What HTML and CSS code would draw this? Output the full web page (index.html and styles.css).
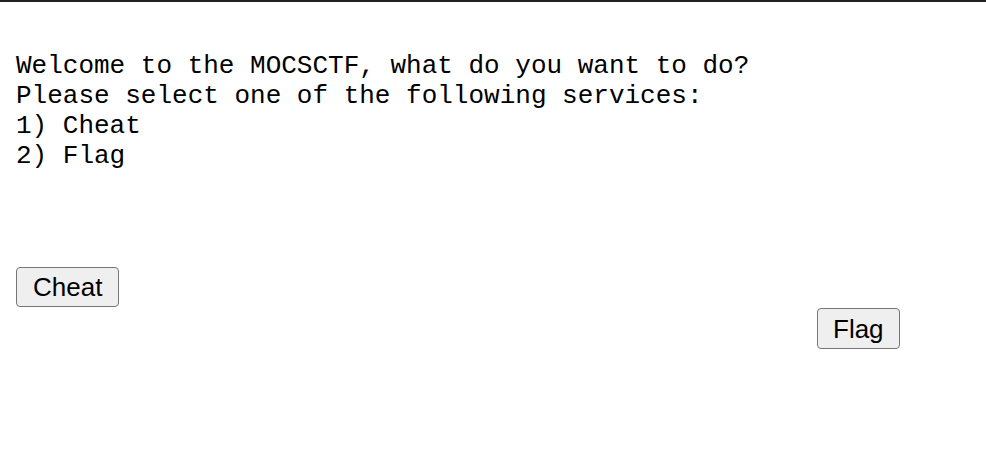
FILE: index.html
```html
<!DOCTYPE html>
<html>
<head>
<meta charset="utf-8">
<link rel="stylesheet" href="styles.css">
</head>
<body>
<div class="topline"></div>
<pre class="menu">Welcome to the MOCSCTF, what do you want to do?
Please select one of the following services:
1) Cheat
2) Flag</pre>
<div class="row row-cheat"><button class="btn">Cheat</button></div>
<div class="row row-flag"><button class="btn btn-flag">Flag</button></div>
</body>
</html>
```
FILE: styles.css
```css
html, body {
  margin: 0;
  padding: 0;
  background: #ffffff;
}
.topline {
  height: 2px;
  background: #222222;
}
.menu {
  margin: 49px 16px 0 16px;
  font-family: "Liberation Mono", "Courier New", monospace;
  font-size: 26px;
  line-height: 30px;
  color: #000000;
}
.row {
  display: flex;
}
.row-cheat {
  margin-top: 96px;
  padding-left: 16px;
}
.row-flag {
  margin-top: 1px;
  padding-left: 817px;
}
.btn {
  font-family: "Liberation Sans", Arial, sans-serif;
  font-size: 26px;
  line-height: 30px;
  padding: 4px 16px;
  margin: 0;
  color: #000000;
  background: #efefef;
  border: 1px solid #767676;
  border-radius: 4px;
}
.btn-flag {
  padding: 5px 15px 4px 15px;
}
```
